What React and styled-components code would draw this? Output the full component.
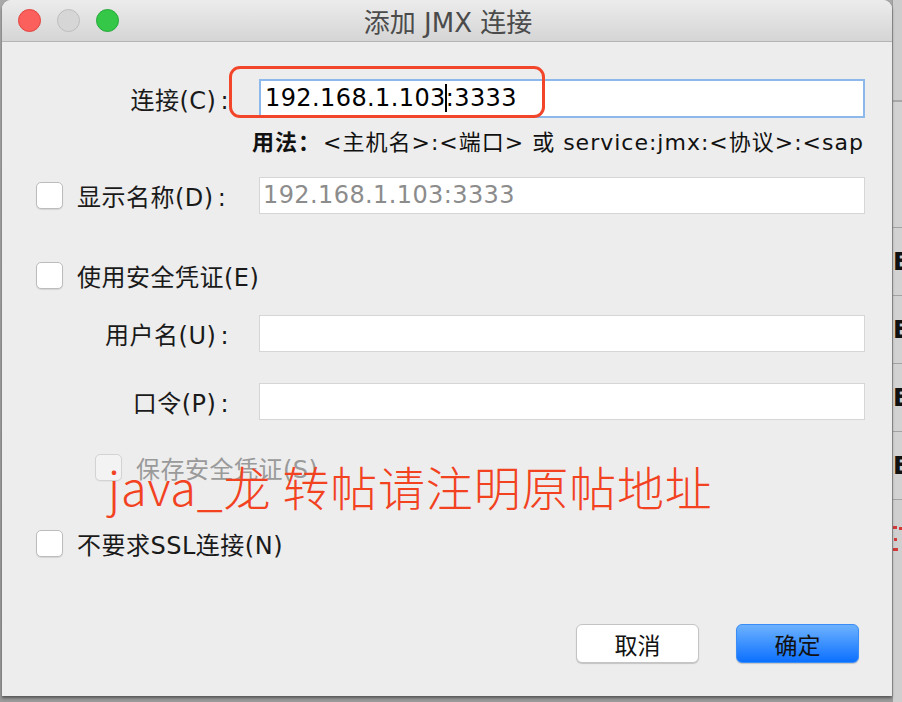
import React from "react";
import styled, { createGlobalStyle } from "styled-components";

const Global = createGlobalStyle`
  html, body { margin: 0; padding: 0; }
  body {
    background: #a9a9a9;
    font-family: "DejaVu Sans", "Noto Sans CJK SC", sans-serif;
    width: 902px;
    height: 702px;
    overflow: hidden;
  }
`;

const Desktop = styled.div`
  display: flex;
  width: 902px;
  height: 702px;
  background: linear-gradient(#a9a9a9, #9a9a9a);
`;

const Window = styled.div`
  position: relative;
  width: 890px;
  height: 696px;
  margin-left: 2px;
  background: #ededed;
  border-radius: 9px 9px 0 0;
  overflow: hidden;
  box-shadow: 0 2px 3px rgba(0, 0, 0, 0.45);
  display: flex;
  flex-direction: column;
  z-index: 1;
`;

const TitleBar = styled.div`
  position: relative;
  height: 41px;
  flex: none;
  display: flex;
  align-items: center;
  justify-content: center;
  background: linear-gradient(#ececec, #d5d5d5);
  border-bottom: 1px solid #b4b4b4;
`;

const Lights = styled.div`
  position: absolute;
  left: 16px;
  top: 9px;
  display: flex;
  gap: 16px;
`;

const Light = styled.span`
  width: 23px;
  height: 23px;
  border-radius: 50%;
  background: ${(p) => p.$bg};
  border: 1px solid ${(p) => p.$bd};
  box-sizing: border-box;
`;

const Title = styled.div`
  font-family: "DejaVu Sans", "Noto Sans CJK SC", sans-serif;
  font-size: 26px;
  color: #4b4b4b;
  margin-left: 2px;
`;

const Body = styled.div`
  position: relative;
  flex: 1;
  display: flex;
  flex-direction: column;
  padding-left: 34px;
`;

const Row = styled.div`
  position: relative;
  display: flex;
  align-items: center;
  height: ${(p) => p.$h || 38}px;
  margin-top: ${(p) => p.$mt}px;
  flex: none;
`;

const Label = styled.div`
  width: ${(p) => p.$w || 193}px;
  flex: none;
  text-align: ${(p) => p.$align || "right"};
  font-size: 24px;
  letter-spacing: 0.5px;
  color: ${(p) => (p.$disabled ? "#9a9a9a" : "#1a1a1a")};
  white-space: nowrap;
  font-family: "DejaVu Sans", "Noto Sans CJK SC", sans-serif;
`;

const Colon = styled.span`
  margin-left: 4px;
`;

const Input = styled.div`
  box-sizing: border-box;
  width: 606px;
  height: ${(p) => (p.$focus ? 39 : 37)}px;
  margin-left: 30px;
  background: #fff;
  border: ${(p) => (p.$focus ? "2px solid #8db8ec" : "1px solid #d6d6d6")};
  display: flex;
  align-items: center;
  padding-left: ${(p) => (p.$focus ? 4 : 3)}px;
  font-family: "DejaVu Sans", sans-serif;
  font-size: 24px;
  letter-spacing: 0.4px;
  color: ${(p) => (p.$disabled ? "#8c8c8c" : "#000")};
  white-space: nowrap;
`;

const Caret = styled.span`
  display: inline-block;
  width: 2px;
  height: 28px;
  background: #000;
  margin: 0 -1px;
  vertical-align: middle;
`;

const RedBox = styled.div`
  position: absolute;
  left: 193px;
  top: -12px;
  width: 316px;
  height: 52px;
  box-sizing: border-box;
  border: 3.5px solid #f2452a;
  border-radius: 11px;
  pointer-events: none;
`;

const Usage = styled.div`
  margin-left: 216px;
  margin-top: 10px;
  height: 24px;
  display: flex;
  align-items: center;
  font-size: 22px;
  letter-spacing: 1px;
  color: #111;
  white-space: nowrap;
  font-family: "DejaVu Sans", "Noto Sans CJK SC", sans-serif;
`;

const Bold = styled.b`
  font-family: "Noto Sans CJK SC", sans-serif;
  font-weight: 700;
  margin-right: 2px;
`;

const Check = styled.span`
  box-sizing: border-box;
  width: 27px;
  height: 27px;
  flex: none;
  border-radius: 5px;
  background: ${(p) => (p.$disabled ? "#f3f3f3" : "#fff")};
  border: 1px solid ${(p) => (p.$disabled ? "#d3d3d3" : "#bcbcbc")};
  box-shadow: 0 1px 1px rgba(0, 0, 0, ${(p) => (p.$disabled ? 0.04 : 0.1)});
  margin-left: ${(p) => p.$ml || 0}px;
  margin-right: 14px;
`;

const Watermark = styled.div`
  position: absolute;
  left: 106px;
  top: 420px;
  font-family: "Noto Sans CJK SC", sans-serif;
  font-weight: 300;
  font-size: 47px;
  line-height: 1;
  color: #f2421f;
  white-space: nowrap;
  letter-spacing: 0.8px;
  pointer-events: none;
`;

const Buttons = styled.div`
  display: flex;
  justify-content: flex-end;
  gap: 37px;
  padding-right: 33px;
  margin-top: 62px;
`;

const Button = styled.button`
  box-sizing: border-box;
  width: 123px;
  height: 39px;
  border-radius: 6px;
  font-family: "Noto Sans CJK SC", sans-serif;
  font-size: 23px;
  color: #111;
  padding: 0;
  border: 1px solid ${(p) => (p.$primary ? "#3a8cf6" : "#c4c4c4")};
  background: ${(p) =>
    p.$primary ? "linear-gradient(#6db2ff, #0c70ff)" : "#ffffff"};
  box-shadow: 0 1px 1px rgba(0, 0, 0, 0.18);
`;

const Behind = styled.div`
  flex: 1;
  height: 702px;
  background: #cfcfcf;
  border-left: 1px solid #9c9c9c;
  display: flex;
  flex-direction: column;
  overflow: hidden;
`;

const BehindTop = styled.div`
  height: 100px;
  flex: none;
  border-bottom: 2px solid #a8a8a8;
  background: #cdcdcd;
`;

const BehindRow = styled.div`
  height: 67px;
  flex: none;
  border-bottom: 1px solid #a3a3a3;
  display: flex;
  align-items: center;
  font-family: "DejaVu Sans", sans-serif;
  font-weight: 700;
  font-size: 24px;
  color: #111;
  background: #d2d2d2;
`;

const BehindSpacer = styled.div`
  height: ${(p) => p.$h}px;
  flex: none;
  border-bottom: 1px solid #a3a3a3;
  background: #d2d2d2;
`;

const Dots = styled.svg`
  margin-top: 26px;
  flex: none;
`;

export default function App() {
  return (
    <>
      <Global />
      <Desktop>
        <Window>
          <TitleBar>
            <Lights>
              <Light $bg="#fc605c" $bd="#e0443e" />
              <Light $bg="#d6d6d6" $bd="#bdbdbd" />
              <Light $bg="#34c748" $bd="#27a83a" />
            </Lights>
            <Title>添加 JMX 连接</Title>
          </TitleBar>
          <Body>
            <Row $mt={36} $h={40}>
              <Label>连接(C)<Colon>:</Colon></Label>
              <Input $focus>
                192.168.1.103<Caret />:3333
              </Input>
              <RedBox />
            </Row>
            <Usage>
              <Bold>用法：</Bold>
              &lt;主机名&gt;:&lt;端口&gt; 或 service:jmx:&lt;协议&gt;:&lt;sap
            </Usage>
            <Row $mt={24}>
              <Check />
              <Label $align="left" $w={152}>显示名称(D)<Colon>:</Colon></Label>
              <Input $disabled>192.168.1.103:3333</Input>
            </Row>
            <Row $mt={42}>
              <Check />
              <Label $align="left" $w={300}>使用安全凭证(E)</Label>
            </Row>
            <Row $mt={20}>
              <Label>用户名(U)<Colon>:</Colon></Label>
              <Input />
            </Row>
            <Row $mt={30}>
              <Label>口令(P)<Colon>:</Colon></Label>
              <Input />
            </Row>
            <Row $mt={28}>
              <Check $ml={59} $disabled />
              <Label $align="left" $w={250} $disabled>保存安全凭证(S)</Label>
            </Row>
            <Row $mt={38}>
              <Check />
              <Label $align="left" $w={300}>不要求SSL连接(N)</Label>
            </Row>
            <Buttons>
              <Button>取消</Button>
              <Button $primary>确定</Button>
            </Buttons>
            <Watermark>java_龙 转帖请注明原帖地址</Watermark>
          </Body>
        </Window>
        <Behind>
          <BehindTop />
          <BehindSpacer $h={125} />
          <BehindRow>E</BehindRow>
          <BehindRow>E</BehindRow>
          <BehindRow>E</BehindRow>
          <BehindRow>E</BehindRow>
          <Dots width="10" height="30" viewBox="0 0 10 30">
            <rect x="0" y="0" width="4" height="3" fill="#d23a3a" />
            <rect x="6" y="1" width="3" height="3" fill="#d23a3a" />
            <rect x="1" y="12" width="3" height="3" fill="#d23a3a" />
            <rect x="0" y="22" width="5" height="3" fill="#d23a3a" />
          </Dots>
        </Behind>
      </Desktop>
    </>
  );
}
